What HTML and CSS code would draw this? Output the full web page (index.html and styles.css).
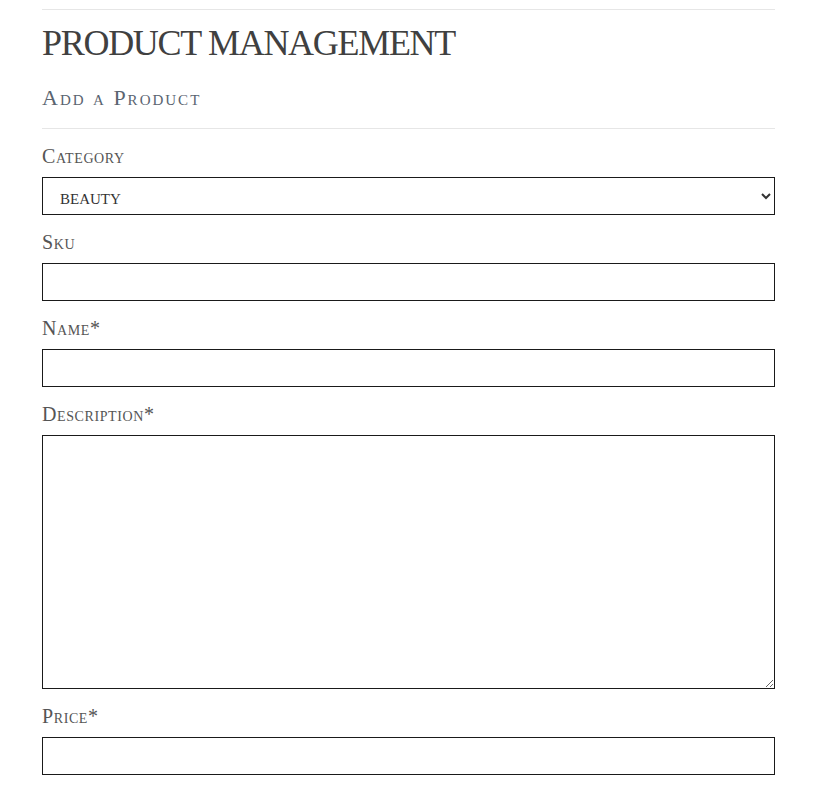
FILE: index.html
```html
<!DOCTYPE html>
<html lang="en">

<head>
    <title>Product Management</title>
    <meta charset="UTF-8">
    <meta name="viewport" content="width=device-width, initial-scale=1.0">
    <link rel="stylesheet" href="styles.css">
</head>

<body>
    <div class="container">
        <hr class="rule">
        <h1 class="title">PRODUCT MANAGEMENT</h1>
        <h2 class="subtitle">Add a Product</h2>
        <hr class="rule">

        <form class="product-form">
            <div class="field">
                <label for="category">Category</label>
                <select id="category">
                    <option>beauty</option>
                    <option>electronics</option>
                    <option>home</option>
                </select>
            </div>
            <div class="field">
                <label for="sku">Sku</label>
                <input type="text" id="sku">
            </div>
            <div class="field">
                <label for="name">Name*</label>
                <input type="text" id="name">
            </div>
            <div class="field">
                <label for="description">Description*</label>
                <textarea id="description"></textarea>
            </div>
            <div class="field">
                <label for="price">Price*</label>
                <input type="text" id="price">
            </div>
        </form>
    </div>
</body>

</html>
```

FILE: styles.css
```css
* {
    box-sizing: border-box;
}

body {
    margin: 0;
    font-family: "Liberation Serif", "Times New Roman", serif;
    color: #555;
    background: #fff;
}

.container {
    width: 733px;
    margin: 0 0 0 42px;
    padding-top: 9px;
}

.rule {
    margin: 0;
    border: 0;
    border-top: 1px solid #e6e6e6;
}

.title {
    margin: 13px 0 0;
    font-size: 36px;
    line-height: 40px;
    font-weight: normal;
    letter-spacing: -1.3px;
    color: #404040;
}

.subtitle {
    margin: 21px 0 16px;
    font-size: 22px;
    line-height: 28px;
    font-weight: normal;
    font-variant: small-caps;
    letter-spacing: 2px;
    color: #5a6470;
}

.product-form {
    padding-top: 15px;
}

.field {
    margin-bottom: 15px;
}

.field label {
    display: block;
    font-size: 20px;
    line-height: 24px;
    font-variant: small-caps;
    letter-spacing: 0.6px;
    color: #555;
    margin-bottom: 9px;
}

.field input,
.field select,
.field textarea {
    display: block;
    width: 100%;
    height: 38px;
    margin: 0;
    border: 1px solid #1a1a1a;
    border-radius: 0;
    background: #fff;
    font-family: inherit;
}

.field select {
    padding: 0 12px 0 13px;
    font-size: 22px;
    font-variant: small-caps;
    letter-spacing: 0;
    color: #333;
}

.field textarea {
    height: 254px;
    resize: vertical;
}
```
